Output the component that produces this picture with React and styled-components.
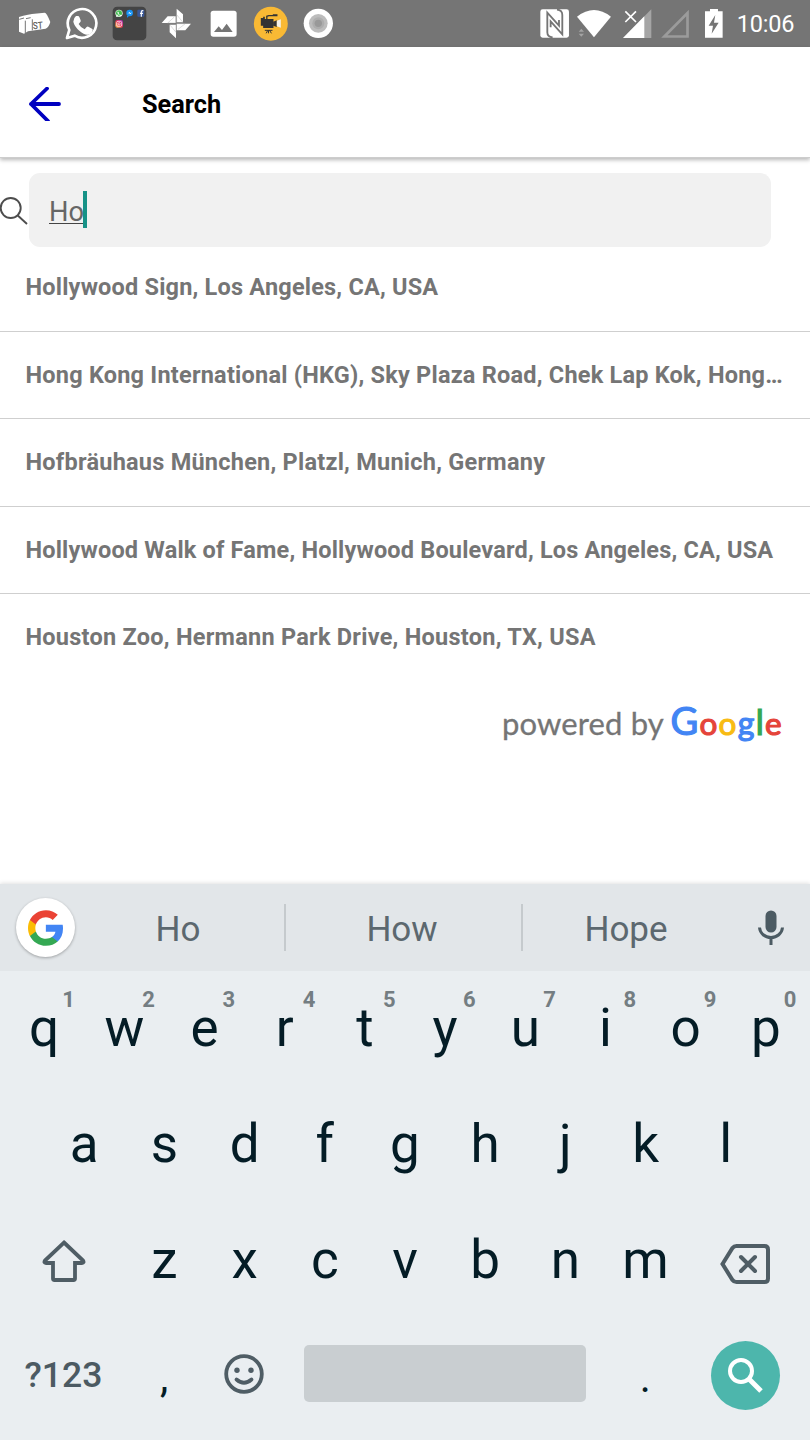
import React from "react";
import styled, { createGlobalStyle } from "styled-components";

const Global = createGlobalStyle`
  * { box-sizing: border-box; }
  body { margin: 0; background: #fff; font-family: Roboto, "Liberation Sans", sans-serif; }
`;

const Screen = styled.div`
  width: 810px;
  height: 1440px;
  display: flex;
  flex-direction: column;
  overflow: hidden;
  background: #fff;
`;

const StatusBar = styled.div`
  height: 47px;
  flex: none;
  display: flex;
  background: #757575;
  padding-left: 11px;
  color: #fff;
`;

const StatusIcon = styled.svg`
  display: block;
  flex: none;
  width: ${(p) => p.$w}px;
  height: 47px;
`;

const StatusRight = styled.div`
  display: flex;
  margin-left: 192.9px;
`;

const Clock = styled.div`
  font-size: 23.5px;
  line-height: 49px;
  margin-left: 6px;
  letter-spacing: -0.25px;
  white-space: nowrap;
  width: 62px;
`;

const Header = styled.header`
  height: 111px;
  flex: none;
  display: flex;
  align-items: center;
  padding: 3px 0 0 28px;
  border-bottom: 1px solid #cdcdcd;
  box-shadow: 0 2px 4px rgba(0, 0, 0, 0.28);
`;

const BackIcon = styled.svg`
  width: 34px;
  height: 34px;
  flex: none;
`;

const Title = styled.h1`
  margin: 2px 0 0 80px;
  font-size: 25.3px;
  font-weight: 700;
  line-height: 32px;
  color: #000;
`;

const SearchRow = styled.div`
  flex: none;
  display: flex;
  align-items: center;
  padding: 14.5px 39px 0 0;
  height: 89px;
`;

const SearchIcon = styled.svg`
  width: 29px;
  height: 30px;
  flex: none;
`;

const Field = styled.div`
  flex: 1;
  height: 74px;
  border-radius: 11px;
  background: #f1f1f1;
  display: flex;
  align-items: center;
  padding-left: 20px;
`;

const Typed = styled.span`
  font-size: 27.3px;
  line-height: 32px;
  color: #666;
  height: 28px;
  border-bottom: 1px solid #444;
  margin-right: -1px;
`;

const Caret = styled.span`
  width: 4px;
  height: 37px;
  margin-top: -1px;
  background: #179287;
`;

const Results = styled.ul`
  list-style: none;
  margin: -2.8px 0 0;
  padding: 0;
  flex: none;
`;

const Result = styled.li`
  height: 87.5px;
  line-height: 86px;
  padding: 0 20px 0 25.5px;
  font-size: 23.5px;
  letter-spacing: ${(p) => p.$track}px;
  font-weight: 700;
  color: #757575;
  white-space: nowrap;
  border-bottom: 1px solid ${(p) => (p.$last ? "transparent" : "#cfcfcf")};
`;

const Attribution = styled.div`
  flex: 1;
  display: flex;
  align-items: baseline;
  justify-content: flex-end;
  padding: 16.3px 27px 0 0;
  font-family: Lato, "Open Sans", sans-serif;
  line-height: 44px;
`;

const Powered = styled.span`
  font-size: 31px;
  letter-spacing: 0.15px;
  color: #757575;
  -webkit-text-stroke: 0.3px #757575;
  margin-right: 6.5px;
`;

const Brand = styled.span`
  font-size: 34px;
  white-space: nowrap;
`;

const Letter = styled.span`
  color: ${(p) => p.$c};
  font-size: ${(p) => p.$size}px;
  -webkit-text-stroke: 1.2px ${(p) => p.$c};
  letter-spacing: 1.3px;
`;

const Keyboard = styled.section`
  flex: none;
  height: 556px;
  background: #eaeef1;
  box-shadow: 0 -1px 4px rgba(0, 0, 0, 0.12);
`;

const Strip = styled.div`
  height: 87px;
  display: flex;
  align-items: center;
  background: #e2e6e9;
`;

const GoogleSlot = styled.div`
  width: 72px;
  padding-left: 16px;
  flex: none;
`;

const GoogleButton = styled.div`
  width: 59px;
  height: 59px;
  border-radius: 50%;
  background: #fff;
  box-shadow: 0 1px 3px rgba(0, 0, 0, 0.3);
  display: flex;
  align-items: center;
  justify-content: center;
`;

const Suggestion = styled.div`
  width: ${(p) => p.$w}px;
  height: 47px;
  line-height: 52px;
  text-align: center;
  font-size: 35px;
  padding-right: ${(p) => p.$shift || 0}px;
  color: #5c686f;
  border-right: ${(p) => (p.$last ? 0 : 2)}px solid #c5cacd;
`;

const MicSlot = styled.div`
  flex: 1;
  display: flex;
  justify-content: center;
`;

const KeyRow = styled.div`
  display: flex;
  justify-content: center;
  height: 116px;
`;

const Key = styled.div`
  width: 80.2px;
  position: relative;
  text-align: center;
  font-size: 53px;
  line-height: 114px;
  color: #041c26;
`;

const Hint = styled.span`
  position: absolute;
  right: 9.5px;
  top: 17px;
  font-size: 22px;
  line-height: 24px;
  font-weight: 700;
  color: #747d82;
`;

const WideKey = styled.div`
  width: 120px;
  height: 116px;
  display: flex;
  align-items: center;
  justify-content: center;
  padding: ${(p) => p.$pad || "0"};
`;

const BottomRow = styled.div`
  display: flex;
  align-items: center;
  height: 112px;
  padding-left: 4px;
`;

const ModeKey = styled.div`
  width: 120px;
  padding-right: 1px;
  text-align: center;
  font-size: 35.5px;
  font-weight: 500;
  line-height: 112px;
  color: #4c5a62;
`;

const PunctKey = styled(Key)`
  font-size: 42px;
  height: 112px;
  line-height: 117px;
`;

const EmojiKey = styled.div`
  width: 80px;
  display: flex;
  justify-content: center;
  padding-bottom: 3px;
`;

const SpaceBar = styled.div`
  width: 282px;
  height: 57px;
  border-radius: 5px;
  background: #c9ced1;
  margin: 0 19px 3px 20px;
`;

const SearchKey = styled.div`
  width: 69px;
  height: 69px;
  border-radius: 50%;
  background: #4db6ac;
  margin-left: 25.5px;
`;

const Block = styled.svg`
  display: block;
`;

const places = [
  { name: "Hollywood Sign, Los Angeles, CA, USA", track: 0.2 },
  { name: "Hong Kong International (HKG), Sky Plaza Road, Chek Lap Kok, Hong…", track: 0.22 },
  { name: "Hofbräuhaus München, Platzl, Munich, Germany", track: 0.24 },
  { name: "Hollywood Walk of Fame, Hollywood Boulevard, Los Angeles, CA, USA", track: 0.18 },
  { name: "Houston Zoo, Hermann Park Drive, Houston, TX, USA", track: 0.25 },
];

const brand = [
  ["G", "#4285f4", 38],
  ["o", "#e5443a", 31.5],
  ["o", "#f8bb13", 31.5],
  ["g", "#4285f4", 32],
  ["l", "#34a853", 34],
  ["e", "#e5443a", 31.5],
];

const Notifications = () => (
  <>
    <StatusIcon $w={47.3} viewBox="33 0 142 141">
      <path d="M57 51L70 47L84 44L96 42L134 38Q140 38 151 66Q147 82 137 86L84 94L72 101L57 95Z" fill="#fff" />
      <path d="M76 62V100M97 58V91M58 58l14-4M78 56l14-3" stroke="#757575" strokeWidth="3" fill="none" />
      <text x="99" y="88" fontSize="30" fontWeight="500" fill="#666" transform="rotate(-4 99 88)" textLength="30" lengthAdjust="spacingAndGlyphs">ST</text>
    </StatusIcon>
    <StatusIcon $w={47.3} viewBox="175 0 142 141">
      <path d="M202 114L209 90A43 43 0 1 1 225 107Z" fill="none" stroke="#fff" strokeWidth="8" strokeLinejoin="round" />
      <path d="M229 48h6q3 0 4 3l4 10q1 3-1 5l-5 6q6 11 18 16l6-7q2-2 5-1l11 6q3 1 2 5q-2 12-15 13q-10 1-25-12t-18-27q0-11 8-17z" fill="#fff" />
    </StatusIcon>
    <StatusIcon $w={47.3} viewBox="317 0 142 141">
      <rect x="337" y="20" width="101" height="101" rx="13" fill="#444" />
      <circle cx="356" cy="40" r="11" fill="#e6f5e6" /><circle cx="356" cy="40" r="9" fill="#43bd52" />
      <path d="M351 35l3 0 2 4 -1 2 4 4 3-1 3 3q-4 3-9-2t-5-10z" fill="#fff" />
      <path d="M347 51l2-9 6 6z" fill="#e6f5e6" />
      <circle cx="388" cy="39" r="10" fill="#1593f5" /><path d="M380 48v5l6-4z" fill="#1593f5" />
      <path d="M381 43l6-7 4 4 5-4-6 7-4-4z" fill="#fff" />
      <rect x="411" y="29" width="21" height="21" rx="3" fill="#3a5796" />
      <path d="M423 50V35q0-3 4-3h2M419 40h9" stroke="#fff" strokeWidth="3.5" fill="none" />
      <defs><linearGradient id="insta" x1="0" y1="1" x2="1" y2="0"><stop offset="0" stopColor="#ffc447" /><stop offset=".5" stopColor="#ec3154" /><stop offset="1" stopColor="#9934c4" /></linearGradient></defs>
      <rect x="345" y="60" width="23" height="23" rx="6" fill="url(#insta)" />
      <rect x="349" y="64" width="15" height="15" rx="4" fill="none" stroke="#fff" strokeWidth="2" /><circle cx="356.500" cy="71.500" r="3.500" fill="none" stroke="#fff" strokeWidth="2" />
    </StatusIcon>
    <StatusIcon $w={47.3} viewBox="459 0 142 141">
      <path d="M530 26L549 43V67H530ZM573 71L556 91H530V71ZM528 115L509 97V74H528ZM485 69L503 49H527V69Z" fill="#fff" />
      <path d="M530 70V44L549 67M530 71H556L534 88M528 72V97L511 76M527 69H503L523 51" stroke="#aaa" strokeWidth="2" fill="none" opacity=".6" />
    </StatusIcon>
    <StatusIcon $w={47.3} viewBox="601 0 142 141">
      <rect x="633" y="32" width="78" height="78" rx="8" fill="#fff" />
      <path d="M643 96L657 79L667 90L681 71L699 96Z" fill="#757575" />
    </StatusIcon>
    <StatusIcon $w={47.3} viewBox="741.500 0 142 141">
      <circle cx="813" cy="71" r="51" fill="#f9b934" />
      <path d="M783 54h7v-4h5v7h26v27h-31v-7h-7z" fill="#333" />
      <path d="M820 65l11-4v20l-11-4z" fill="#333" /><path d="M831 62l12-4v25l-12-4z" fill="#f5f2e8" />
      <path d="M801 57v-8l6-2h26M821 47v-2h12" stroke="#333" strokeWidth="4" fill="none" />
      <path d="M795 91h23M804 91l-5 9M806 91v9M809 91l6 9" stroke="#333" strokeWidth="3" />
    </StatusIcon>
    <StatusIcon $w={47.3} viewBox="885 0 142 141">
      <circle cx="955" cy="70" r="44" fill="#fff" /><circle cx="955" cy="70" r="28" fill="#bcbcbc" />
      <circle cx="955" cy="70" r="18" fill="#adadad" /><circle cx="955" cy="70" r="11" fill="#999" />
    </StatusIcon>
  </>
);

const SystemIcons = () => (
  <>
    <StatusIcon $w={38.3} viewBox="45 0 115 141">
      <path d="M68 28H140Q147 28 147 35V106Q147 113 140 113H68Q61 113 61 106V35Q61 28 68 28Z" fill="#fff" />
      <path d="M98 112Q82 111 82 97V38L117 77V60M111 29Q127 30 127 45V103L92 64V82" stroke="#757575" strokeWidth="5.500" fill="none" />
    </StatusIcon>
    <StatusIcon $w={43.3} viewBox="160 0 130 141">
      <path d="M172 50Q223 10 274 50L223 112Z" fill="#fff" />
      <path d="M177 95l8-9 8 9zM177 101l8 9 8-9z" fill="#a3a3a3" />
    </StatusIcon>
    <StatusIcon $w={39.3} viewBox="290 0 118 141">
      <path d="M308 114L393 28V114Z" fill="#a5a5a5" /><path d="M308 114L372 49V114Z" fill="#fff" />
      <path d="M315 34L347 66M347 34L315 66" stroke="#fff" strokeWidth="5" />
    </StatusIcon>
    <StatusIcon $w={40.7} viewBox="409 0 122 141">
      <path d="M434 109.500L503.500 39V109.500Z" fill="none" stroke="#9b9b9b" strokeWidth="8" />
    </StatusIcon>
    <StatusIcon $w={34.3} viewBox="532 0 103 141">
      <path d="M556 34H571V27H595V34H609V113H556Z" fill="#fff" />
      <path d="M587 45L567 77H580L576 101L597 68H583Z" fill="#757575" />
    </StatusIcon>
  </>
);

const letters = (row, hints) =>
  row.split("").map((ch, i) => (
    <Key key={ch}>
      {ch}
      {hints && <Hint>{(i + 1) % 10}</Hint>}
    </Key>
  ));

export default function App() {
  return (
    <Screen>
      <Global />
      <StatusBar>
        <Notifications />
        <StatusRight>
          <SystemIcons />
          <Clock>10:06</Clock>
        </StatusRight>
      </StatusBar>
      <Header>
        <BackIcon viewBox="0 0 34 34" fill="none" stroke="#0000c0" strokeWidth="3.8" strokeLinecap="round" strokeLinejoin="round">
          <path d="M19 1.500L3 17L20 34M3 17H31" />
        </BackIcon>
        <Title>Search</Title>
      </Header>
      <SearchRow>
        <SearchIcon viewBox="0 0 29 30" fill="none" stroke="#4d4d4d" strokeWidth="1.9">
          <circle cx="10.700" cy="13" r="10" /><path d="M17.500 20.300L27 29" />
        </SearchIcon>
        <Field>
          <Typed>Ho</Typed>
          <Caret />
        </Field>
      </SearchRow>
      <Results>
        {places.map((p, i) => (
          <Result key={p.name} $track={p.track} $last={i === places.length - 1}>{p.name}</Result>
        ))}
      </Results>
      <Attribution>
        <Powered>powered by</Powered>
        <Brand>
          {brand.map(([ch, c, size], i) => (
            <Letter key={i} $c={c} $size={size}>{ch}</Letter>
          ))}
        </Brand>
      </Attribution>
      <Keyboard>
        <Strip>
          <GoogleSlot>
            <GoogleButton>
              <Block width="35" height="36" viewBox="2 2 43.120 44">
                <path fill="#4285F4" d="M45.120 24.500c0-1.560-.14-3.060-.4-4.500H24v8.510h11.840c-.51 2.750-2.060 5.080-4.390 6.640v5.520h7.110c4.160-3.830 6.560-9.470 6.560-16.170z" />
                <path fill="#34A853" d="M24 46c5.940 0 10.920-1.970 14.560-5.330l-7.110-5.520c-1.970 1.320-4.490 2.100-7.450 2.100-5.730 0-10.580-3.870-12.310-9.070H4.340v5.700C7.960 41.070 15.400 46 24 46z" />
                <path fill="#FBBC05" d="M11.690 28.180C11.250 26.860 11 25.450 11 24s.25-2.860.69-4.180v-5.700H4.340C2.850 17.090 2 20.450 2 24c0 3.550.85 6.910 2.340 9.880l7.350-5.700z" />
                <path fill="#EA4335" d="M24 10.750c3.230 0 6.130 1.110 8.410 3.290l6.310-6.310C34.910 4.180 29.930 2 24 2 15.400 2 7.960 6.930 4.340 14.120l7.350 5.700c1.730-5.200 6.580-9.070 12.310-9.070z" />
              </Block>
            </GoogleButton>
          </GoogleSlot>
          <Suggestion $w={214}>Ho</Suggestion>
          <Suggestion $w={237} $shift={3}>How</Suggestion>
          <Suggestion $w={209} $shift={3} $last>Hope</Suggestion>
          <MicSlot>
            <Block width="28" height="36" viewBox="0 0 28 36">
              <rect x="8.500" y="0.500" width="11" height="22" rx="5.500" fill="#4c5b63" />
              <path d="M2.500 17.500C3 23.500 8 27.500 14 27.500S25 23.500 25.500 17.500M14 27.500V35" fill="none" stroke="#4c5b63" strokeWidth="3" />
            </Block>
          </MicSlot>
        </Strip>
        <KeyRow>{letters("qwertyuiop", true)}</KeyRow>
        <KeyRow>{letters("asdfghjkl")}</KeyRow>
        <KeyRow>
          <WideKey $pad="0 1px 0 0">
            <Block width="46" height="44" viewBox="0 0 46 44" fill="none" stroke="#4f5d65" strokeWidth="3.800" strokeLinejoin="round">
              <path d="M23 3.500L42 21.500Q43.500 24 41 24H34V39.500Q34 41 32.500 41H13.500Q12 41 12 39.500V24H5Q2.500 24 4 21.500Z" strokeLinejoin="miter" />
            </Block>
          </WideKey>
          {letters("zxcvbnm")}
          <WideKey $pad="5px 2px 0 0">
            <Block width="50" height="40" viewBox="0 0 50 40" fill="none" stroke="#4f5d65" strokeWidth="4">
              <path d="M2.500 20L12.500 4Q14 2 16.500 2H44.500Q48 2 48 5.500V34.500Q48 38 44.500 38H16.500Q14 38 12.500 36Z" />
              <path d="M21 13L35 27M35 13L21 27" strokeLinecap="round" />
            </Block>
          </WideKey>
        </KeyRow>
        <BottomRow>
          <ModeKey>?123</ModeKey>
          <PunctKey>,</PunctKey>
          <EmojiKey>
            <Block width="40" height="40" viewBox="0 0 40 40" fill="none" stroke="#4f5d65" strokeWidth="3.800">
              <circle cx="20" cy="20" r="17.800" />
              <path d="M12.500 25.500Q20 32 27.500 25.500" strokeLinecap="round" />
              <g fill="#4f5d65" stroke="none"><circle cx="13" cy="16.300" r="2.700" /><circle cx="27" cy="16.300" r="2.700" /></g>
            </Block>
          </EmojiKey>
          <SpaceBar />
          <PunctKey>.</PunctKey>
          <SearchKey>
            <Block width="69" height="69" viewBox="0 0 69 69" fill="none" stroke="#fff" strokeWidth="4">
              <circle cx="30" cy="30" r="11" /><path d="M38.500 38.500L50 50" strokeWidth="5" />
            </Block>
          </SearchKey>
        </BottomRow>
      </Keyboard>
    </Screen>
  );
}
